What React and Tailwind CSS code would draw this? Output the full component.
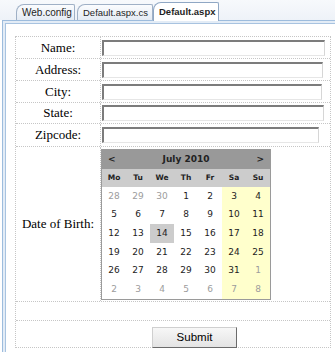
export default function App() {
  const rows = [
    { label: "Name:", h: "h-[22px]", w: "w-[223px]" },
    { label: "Address:", h: "h-[22px]", w: "w-[221px]" },
    { label: "City:", h: "h-[22px]", w: "w-[220px]" },
    { label: "State:", h: "h-[21px]", w: "w-[222px]" },
    { label: "Zipcode:", h: "h-[23px]", w: "w-[217px]" },
  ];
  const days = ["Mo", "Tu", "We", "Th", "Fr", "Sa", "Su"];
  const weeks = [
    [28, 29, 30, 1, 2, 3, 4],
    [5, 6, 7, 8, 9, 10, 11],
    [12, 13, 14, 15, 16, 17, 18],
    [19, 20, 21, 22, 23, 24, 25],
    [26, 27, 28, 29, 30, 31, 1],
    [2, 3, 4, 5, 6, 7, 8],
  ];
  const isOther = (wi, n) => (wi === 0 && n > 20) || (wi >= 4 && n < 15);
  const cell = "border-dotted border-[#c6c6c6]";
  const label = "font-['Liberation_Serif',serif] text-[13px] text-black";

  return (
    <div className="w-[335px] h-[355px] bg-white overflow-hidden relative">
      {/* tab strip */}
      <div className="h-[20px] bg-gradient-to-b from-[#f7f9fc] to-[#eef2f8] flex items-end pl-[16px] font-['Liberation_Sans',sans-serif] text-[9.5px] text-[#1e1e1e]">
        <div className="w-[59px] h-[16px] pl-[5px] flex items-center whitespace-nowrap border border-b-0 border-[#9fb0c6] rounded-tl-[8px] rounded-tr-[2px] bg-gradient-to-b from-[#fbfcfe] to-[#e4ebf4] leading-none text-[10px]">
          Web.config
        </div>
        <div className="ml-[2px] w-[76px] h-[16px] pl-[5px] flex items-center whitespace-nowrap border border-b-0 border-[#9fb0c6] rounded-tl-[8px] rounded-tr-[2px] bg-gradient-to-b from-[#fbfcfe] to-[#e4ebf4] leading-none">
          Default.aspx.cs
        </div>
        <div className="w-[66px] h-[19px] -mb-[1px] pl-[5px] flex items-center whitespace-nowrap border border-b-0 border-[#8fa7c4] rounded-tl-[8px] rounded-tr-[2px] bg-white font-bold text-[9.5px] leading-none relative z-10">
          Default.aspx
        </div>
      </div>

      {/* document frame */}
      <div className="ml-[2px] h-[332px] border-l border-t border-[#9dbcdd] bg-[#e3ecf6] pl-[2px] pt-[2px]">
        <div className="h-full border-l border-t border-[#a8c3e0] bg-white pl-[9px] pt-[12px]">
          <div className={"w-[316px] border " + cell}>
            {rows.map((r) => (
              <div key={r.label} className={"flex border-b " + cell + " " + r.h}>
                <div className={"w-[85px] shrink-0 border-r flex items-center justify-center " + cell}>
                  <span className={label}>{r.label}</span>
                </div>
                <div className="flex-1 flex items-center pl-[1px]">
                  <div
                    className={
                      "h-[16px] bg-white border-t-2 border-l-2 border-r border-b border-t-[#7c7c7c] border-l-[#7c7c7c] border-r-[#d6d6d6] border-b-[#e6e6e6] " +
                      r.w
                    }
                  />
                </div>
              </div>
            ))}

            {/* date of birth */}
            <div className={"flex border-b h-[155px] " + cell}>
              <div className={"w-[85px] shrink-0 border-r flex items-center justify-center " + cell}>
                <span className={label}>Date of Birth:</span>
              </div>
              <div className="flex-1 pt-[2px]">
                <div className="w-[170px] border border-[#9a9a9a] bg-white font-['DejaVu_Sans',sans-serif]">
                  <div className="h-[19px] bg-[#999999] flex items-center justify-between px-[6px] text-[9px] font-bold text-[#222]">
                    <span>&lt;</span>
                    <span>July 2010</span>
                    <span>&gt;</span>
                  </div>
                  <div className="h-[18px] bg-[#cccccc] grid grid-cols-7 items-center text-[7.5px] font-bold text-[#222]">
                    {days.map((d) => (
                      <div key={d} className="text-center">{d}</div>
                    ))}
                  </div>
                  <div className="h-[112px] grid grid-rows-6">
                    {weeks.map((w, wi) => (
                      <div key={wi} className="grid grid-cols-7">
                        {w.map((n, di) => {
                          const other = isOther(wi, n);
                          const sel = wi === 2 && n === 14;
                          const weekend = di >= 5;
                          return (
                            <div
                              key={di}
                              className={
                                "flex items-center justify-center text-[9px] " +
                                (sel ? "bg-[#cccccc] " : weekend ? "bg-[#ffffcc] " : "") +
                                (other ? "text-[#9c9c9c]" : "text-[#1c1c1c]")
                              }
                            >
                              {n}
                            </div>
                          );
                        })}
                      </div>
                    ))}
                  </div>
                </div>
              </div>
            </div>

            {/* empty row */}
            <div className={"h-[19px] border-b " + cell} />

            {/* submit row */}
            <div className="h-[26px] pt-[2px] pl-[136px]">
              <button className="w-[85px] h-[21px] bg-gradient-to-b from-[#f7f7f7] to-[#e4e4e4] border border-t-[#cfcfcf] border-l-[#cfcfcf] border-r-[#6b6b6b] border-b-[#6b6b6b] font-['Liberation_Sans',sans-serif] text-[11.5px] text-black leading-none">
                Submit
              </button>
            </div>
          </div>
        </div>
      </div>
    </div>
  );
}
